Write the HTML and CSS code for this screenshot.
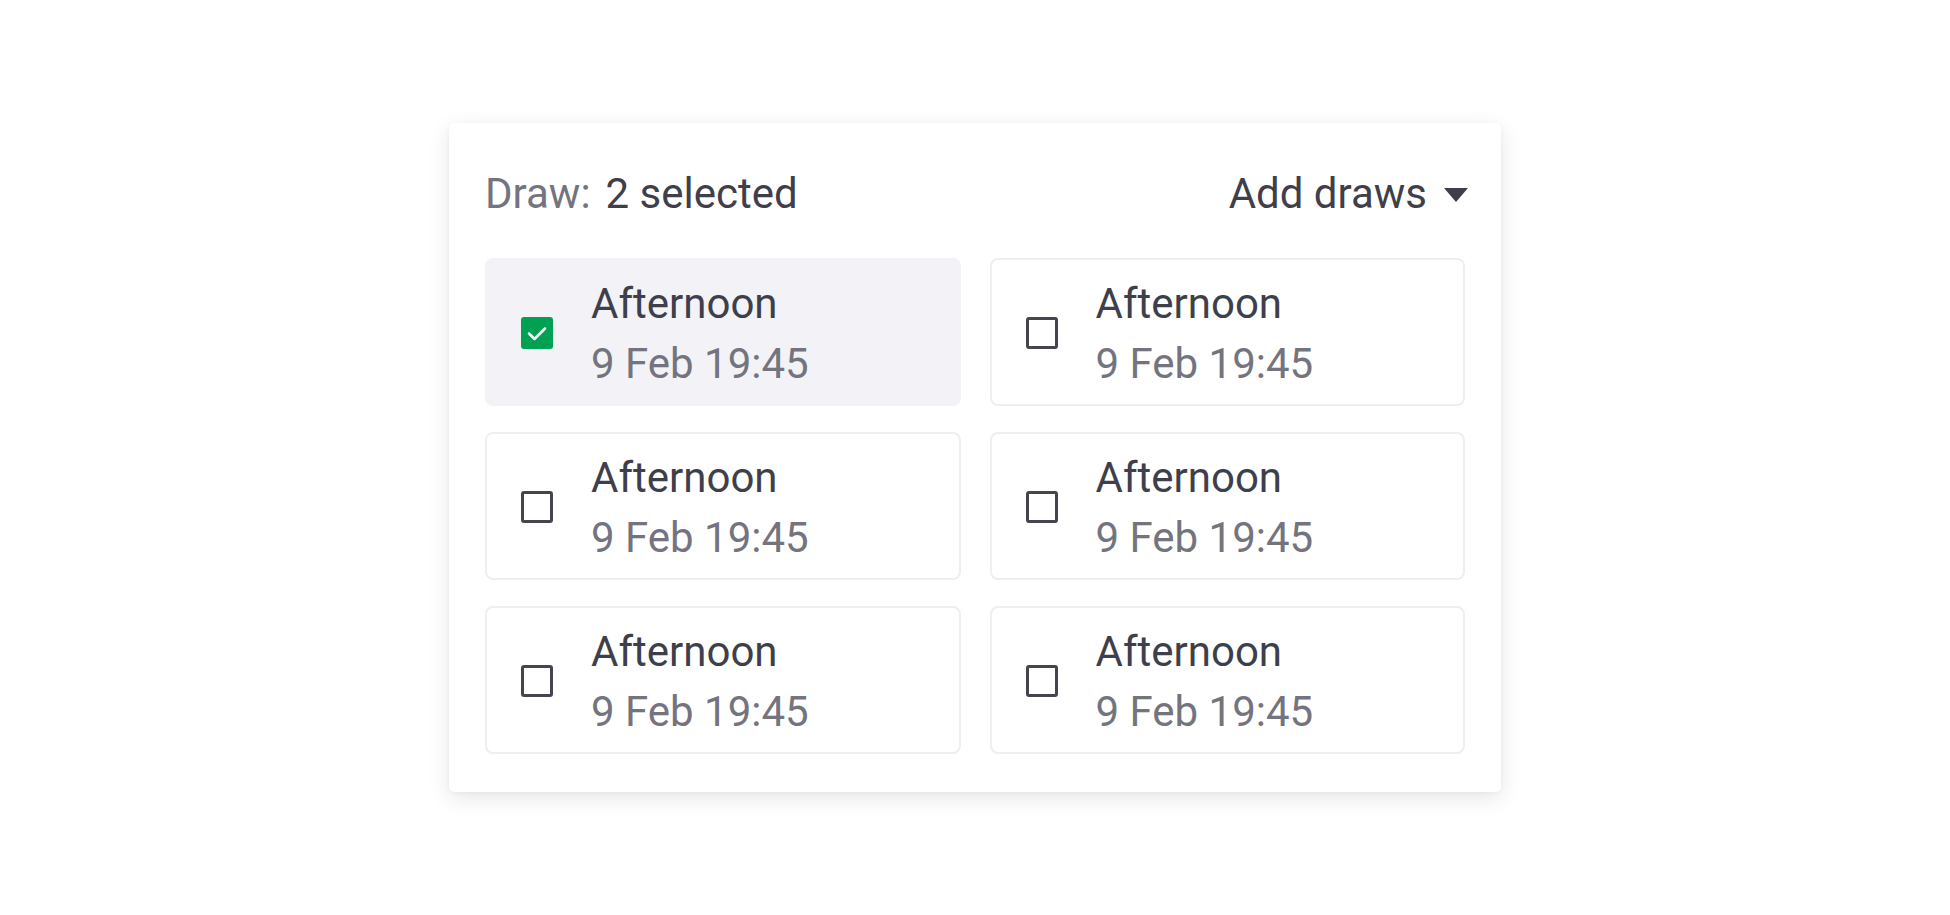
FILE: index.html
```html
<!DOCTYPE html>
<html lang="en">
<head>
<meta charset="utf-8">
<title>Draw selector</title>
<link rel="stylesheet" href="styles.css">
</head>
<body>
<div class="card">
  <div class="header">
    <div class="summary">
      <span class="label">Draw:</span>
      <span class="value">2 selected</span>
    </div>
    <div class="add">
      <span>Add draws</span>
      <svg class="caret" width="24" height="14" viewBox="0 0 24 14"><path d="M0 0H24L12 14Z" fill="#3f3f4b"/></svg>
    </div>
  </div>
  <div class="grid">
    <div class="item selected">
      <span class="box checked"><svg width="32" height="32" viewBox="0 0 32 32"><path d="M8 16.5L13.5 22L24 11.5" fill="none" stroke="#fff" stroke-width="2.5" stroke-linecap="round" stroke-linejoin="round"/></svg></span>
      <div class="text"><div class="name">Afternoon</div><div class="date">9 Feb 19:45</div></div>
    </div>
    <div class="item">
      <span class="box"></span>
      <div class="text"><div class="name">Afternoon</div><div class="date">9 Feb 19:45</div></div>
    </div>
    <div class="item">
      <span class="box"></span>
      <div class="text"><div class="name">Afternoon</div><div class="date">9 Feb 19:45</div></div>
    </div>
    <div class="item">
      <span class="box"></span>
      <div class="text"><div class="name">Afternoon</div><div class="date">9 Feb 19:45</div></div>
    </div>
    <div class="item">
      <span class="box"></span>
      <div class="text"><div class="name">Afternoon</div><div class="date">9 Feb 19:45</div></div>
    </div>
    <div class="item">
      <span class="box"></span>
      <div class="text"><div class="name">Afternoon</div><div class="date">9 Feb 19:45</div></div>
    </div>
  </div>
</div>
</body>
</html>
```

FILE: styles.css
```css
* { box-sizing: border-box; }
html, body { margin: 0; padding: 0; }
body {
  background: #ffffff;
  font-family: Roboto, "Liberation Sans", Arial, sans-serif;
  color: #3f3f4b;
  min-height: 100vh;
  display: flex;
  align-items: center;
  justify-content: center;
}
.card {
  width: 1052px;
  background: #fff;
  border-radius: 5px;
  box-shadow: 0 6px 22px rgba(0, 0, 0, 0.10), 0 1px 4px rgba(0, 0, 0, 0.04);
  padding: 47px 36px 38px 36px;
}
.header {
  display: flex;
  justify-content: space-between;
  align-items: center;
  font-size: 42px;
  line-height: 48px;
  margin-bottom: 40px;
}
.summary { display: flex; gap: 15px; }
.label { color: #74747f; }
.value { color: #3f3f4b; }
.add {
  display: flex;
  align-items: center;
  gap: 17px;
  color: #3f3f4b;
  margin-right: -3px;
}
.caret { display: block; margin-top: 2px; }
.grid {
  display: grid;
  grid-template-columns: 1fr 1fr;
  column-gap: 29px;
  row-gap: 26px;
}
.item {
  height: 148px;
  border: 2px solid #eeeef3;
  border-radius: 8px;
  display: flex;
  align-items: center;
  padding-left: 34px;
}
.item.selected {
  background: #f2f2f7;
  border-color: #f2f2f7;
}
.box {
  width: 32px;
  height: 32px;
  border: 3px solid #45454f;
  border-radius: 3px;
  flex: none;
  margin-top: 1px;
}
.box.checked {
  border: none;
  background: #00a152;
}
.box svg { display: block; }
.text {
  margin-left: 38px;
  font-size: 42px;
  line-height: 60px;
  padding-top: 3px;
}
.name { color: #3f3f4b; }
.date { color: #74747f; }
```
